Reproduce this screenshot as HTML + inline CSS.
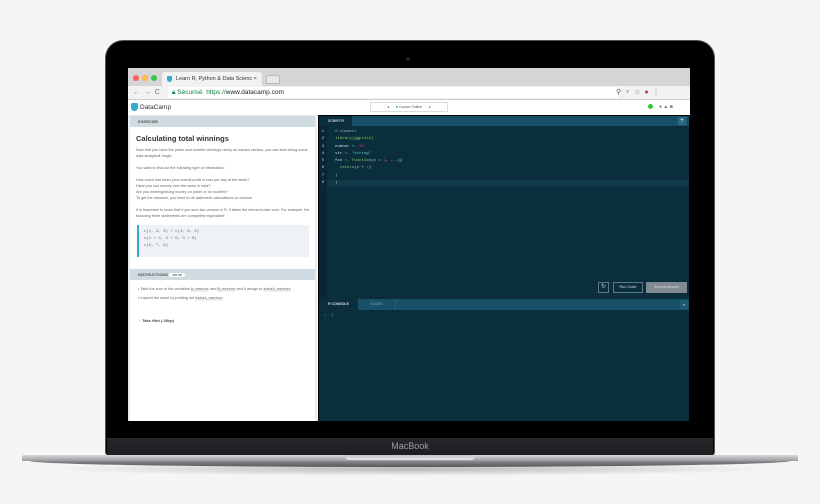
<!DOCTYPE html><html><head><style>
*{margin:0;padding:0;box-sizing:border-box}
body{width:820px;height:504px;background:#f5f5f5;position:relative;overflow:hidden;font-family:"Liberation Sans",sans-serif}
.a{position:absolute}
.m{font-family:"Liberation Mono",monospace}
</style></head><body>
<!-- base shadow -->
<div class="a" style="left:40px;top:462px;width:740px;height:14px;border-radius:50%;background:radial-gradient(ellipse at center,rgba(0,0,0,.25),rgba(0,0,0,0) 70%)"></div>
<!-- lid -->
<div class="a" style="left:105px;top:40px;width:610px;height:416px;background:#000;border-radius:18px 18px 4px 4px;border:1px solid #555"></div>
<div class="a" style="left:406px;top:57px;width:4px;height:4px;border-radius:50%;background:#222"></div>
<div class="a" style="left:107px;top:438px;width:606px;height:18px;background:linear-gradient(#26282b,#1c1d20)"></div>
<div class="a" style="left:107px;top:441px;width:606px;text-align:center;color:#9a9ca0;font-size:9px">MacBook</div>
<!-- base -->
<div class="a" style="left:22px;top:455px;width:776px;height:6px;background:linear-gradient(#d8d8da,#9a9b9e);border-radius:2px 2px 0 0"></div>
<div class="a" style="left:30px;top:461px;width:760px;height:6px;background:linear-gradient(#8a8b8e,#56575a);border-radius:0 0 50% 50%/0 0 100% 100%"></div>
<div class="a" style="left:345px;top:455px;width:130px;height:5px;background:linear-gradient(#c5c5c7,#e5e5e7);border-radius:0 0 4px 4px"></div>
<!-- screen -->
<div class="a" style="left:128px;top:68px;width:562px;height:353px;background:#fff;overflow:hidden">
 <div class="a" style="left:0;top:0;width:562px;height:18px;background:#d5d5d5"></div>
 <div class="a" style="left:5px;top:7px;width:6px;height:6px;border-radius:50%;background:#fc605c"></div>
 <div class="a" style="left:14px;top:7px;width:6px;height:6px;border-radius:50%;background:#fdbc40"></div>
 <div class="a" style="left:23px;top:7px;width:6px;height:6px;border-radius:50%;background:#34c84a"></div>
 <div class="a" style="left:34px;top:4px;width:100px;height:14px;background:#f2f2f2;border-radius:3px 3px 0 0;font-size:5.5px;line-height:14px;padding-left:14px;color:#333">Learn R, Python &amp; Data Scienc ×</div>
 <div class="a" style="left:39px;top:8px;width:5px;height:6px;background:#3ac;border-radius:1px 1px 3px 3px"></div>
 <div class="a" style="left:138px;top:7px;width:14px;height:9px;background:#e8e8e8;border:1px solid #bbb;border-radius:2px 2px 0 0"></div>
 <div class="a" style="left:0;top:18px;width:562px;height:14px;background:#f2f2f2;border-bottom:1px solid #ccc"></div>
 <div class="a" style="left:5px;top:19px;font-size:7px;color:#777;line-height:12px">←&nbsp;&nbsp;→&nbsp;&nbsp;C</div>
 <div class="a" style="left:40px;top:19px;width:450px;height:11px;background:#fff;font-size:6.5px;line-height:11px;padding-left:4px;color:#222"><span style="color:#0b8043">🔒︎ Sécurisé</span>&nbsp; <span style="color:#0b8043">https://</span>www.datacamp.com</div>
 <div class="a" style="left:488px;top:19px;font-size:7px;color:#666;line-height:12px">⚲&nbsp; ♆&nbsp; ☆&nbsp; <span style="color:#c33">●</span>&nbsp; ⋮</div>
 <div class="a" style="left:0;top:32px;width:562px;height:15px;background:#fff"></div>
 <div class="a" style="left:3px;top:35px;width:7px;height:8px;background:#3ac;border-radius:2px 2px 4px 4px"></div>
 <div class="a" style="left:12px;top:34px;font-size:6.5px;line-height:11px;color:#333">DataCamp</div>
 <div class="a" style="left:242px;top:34px;width:78px;height:10px;border:1px solid #ddd;font-size:3.5px;line-height:8px;color:#555;text-align:center">◂ &nbsp;&nbsp;&nbsp;&nbsp;&nbsp;&nbsp;<span style="color:#3ac">■</span> Course Outline&nbsp;&nbsp;&nbsp;&nbsp;&nbsp;&nbsp; ▸</div>
 <div class="a" style="left:520px;top:36px;width:5px;height:5px;border-radius:50%;background:#3c3"></div>
 <div class="a" style="left:531px;top:36px;font-size:5px;color:#777">● ▲ ■</div>
 <!-- left panel -->
 <div class="a" style="left:0;top:47px;width:189px;height:306px;background:#e9ecef"></div>
 <div class="a" style="left:2px;top:48px;width:185px;height:11px;background:#d0dae1;font-size:4px;line-height:11px;padding-left:8px;color:#555;font-weight:bold">EXERCISE</div>
 <div class="a" style="left:2px;top:59px;width:185px;height:294px;background:#fff"></div>
 <div class="a" style="left:8px;top:66px;font-size:7.5px;font-weight:bold;color:#333">Calculating total winnings</div>
 <div class="a" style="left:8px;top:79px;width:176px;font-size:3.8px;line-height:6px;color:#666">Now that you have the poker and roulette winnings nicely as named vectors, you can start doing some data analytical magic.<br><br>You want to find out the following type of information:<br><br>How much has been your overall profit or loss per day of the week?<br>Have you lost money over the week in total?<br>Are you winning/losing money on poker or on roulette?<br>To get the answers, you have to do arithmetic calculations on vectors.<br><br>It is important to know that if you sum two vectors in R, it takes the element-wise sum. For example, the following three statements are completely equivalent:</div>
 <div class="a m" style="left:9px;top:157px;width:172px;height:32px;background:#eef2f6;border-left:2px solid #3ac;font-size:4px;line-height:7px;padding:4px 5px;color:#666">c(1, 2, 3) + c(4, 5, 6)<br>c(1 + 4, 2 + 5, 3 + 6)<br>c(5, 7, 9)</div>
 <div class="a" style="left:2px;top:201px;width:185px;height:11px;background:#d0dae1;font-size:4px;line-height:11px;padding-left:8px;color:#555;font-weight:bold">INSTRUCTIONS <span style="background:#fff;border-radius:3px;padding:0 3px;font-size:3px">100 XP</span></div>
 <div class="a" style="left:10px;top:218px;width:170px;font-size:3.8px;line-height:6px;color:#666">▪ Take the sum of the variables <span class="m" style="background:#eee">A_vector</span> and <span class="m" style="background:#eee">B_vector</span> and it assign to <span class="m" style="background:#eee">total_vector</span>.<br><span style="line-height:10px">▪ Inspect the result by printing out <span class="m" style="background:#eee">total_vector</span>.</span></div>
 <div class="a" style="left:10px;top:250px;font-size:4px;color:#444;font-weight:bold"><span style="color:#3ac">♀</span> Take Hint (-30xp)</div>
 <!-- editor -->
 <div class="a" style="left:190px;top:47px;width:372px;height:306px;background:#000"></div>
 <div class="a" style="left:191px;top:48px;width:370px;height:183px;background:#0b2e3c"></div>
 <div class="a" style="left:191px;top:48px;width:370px;height:10px;background:#185068"></div>
 <div class="a" style="left:191px;top:48px;width:33px;height:10px;background:#0b2e3c;font-size:3.5px;line-height:10px;padding-left:9px;color:#ccd;font-weight:bold">SCRIPT.R</div>
 <div class="a" style="left:550px;top:49px;width:8px;height:8px;background:#2b6a85;color:#fff;font-size:6px;line-height:8px;text-align:center">+</div>
 <div class="a" style="left:191px;top:58px;width:8px;height:173px;background:#082633"></div>
 <div class="a m" style="left:191px;top:61px;width:8px;font-size:4px;line-height:7.3px;color:#ccd;text-align:center">1<br>2<br>3<br>4<br>5<br>6<br>7<br>8</div>
 <div class="a" style="left:199px;top:112px;width:362px;height:7px;background:#10394a"></div>
 <div class="a m" style="left:207px;top:61px;font-size:4px;line-height:7.3px;color:#cde">
 <span style="color:#8a9">#·comment</span><br><span style="color:#8c6">library(ggplot2)</span><br>number <span style="color:#8c6">&lt;-</span> <span style="color:#d36">10</span><br>str <span style="color:#8c6">&lt;-</span> <span style="color:#6cd">"string"</span><br>foo <span style="color:#8c6">&lt;- function</span>(x = <span style="color:#d36">1</span>, ...){<br>&nbsp;&nbsp;<span style="color:#8c6">return</span>(x + <span style="color:#d36">1</span>)<br><span style="color:#8c6">}</span><br>|</div>
 <div class="a" style="left:470px;top:214px;width:11px;height:11px;border:1px solid #5a7a88;color:#ccc;font-size:6px;line-height:9px;text-align:center">↻</div>
 <div class="a" style="left:485px;top:214px;width:30px;height:11px;border:1px solid #5a7a88;color:#ddd;font-size:3.8px;line-height:9px;text-align:center">Run Code</div>
 <div class="a" style="left:518px;top:214px;width:41px;height:11px;background:#7f8b90;color:#ddd;font-size:3.8px;line-height:11px;text-align:center">Submit Answer</div>
 <div class="a" style="left:191px;top:233px;width:370px;height:120px;background:#0b2e3c"></div>
 <div class="a" style="left:191px;top:231px;width:370px;height:11px;background:#185068"></div>
 <div class="a" style="left:191px;top:231px;width:39px;height:11px;background:#0b2e3c;font-size:3.5px;line-height:11px;text-align:center;color:#dde;font-weight:bold">R CONSOLE</div>
 <div class="a" style="left:230px;top:231px;width:38px;height:11px;font-size:3.5px;line-height:11px;text-align:center;color:#7ab;border-right:1px solid #2a6078">SLIDES</div>
 <div class="a" style="left:552px;top:232px;width:8px;height:9px;background:#1e5a72;color:#9bc;font-size:4px;line-height:9px;text-align:center">▾</div>
 <div class="a m" style="left:196px;top:246px;font-size:4px;color:#9ab">›&nbsp;&nbsp;|</div>
</div>
</body></html>
